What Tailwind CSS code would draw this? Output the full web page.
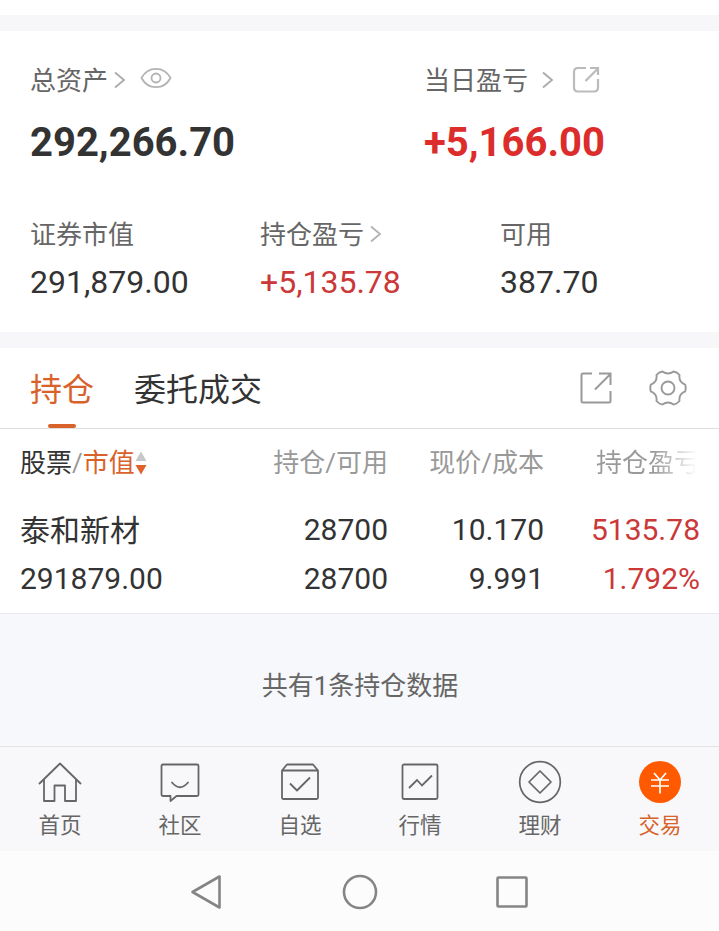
<!DOCTYPE html>
<html lang="zh-CN">

<head>
  <meta charset="UTF-8">
  <meta name="viewport" content="width=device-width, initial-scale=1.0">
  <title>交易</title>
  <script src="https://cdn.jsdelivr.net/npm/@tailwindcss/browser@4"></script>
</head>

<body class="bg-[#fcfcfc] font-['Roboto','Noto_Sans_CJK_SC',sans-serif] text-[#333] overflow-hidden">
  <div class="w-[719px] h-[931px] flex flex-col overflow-hidden">
    <div class="h-[15px] shrink-0 bg-white"></div>
    <div class="h-4 shrink-0 bg-[#f7f7fa]"></div>

    <!-- Account summary -->
    <section class="h-[301px] shrink-0 bg-white px-[30px] pt-[30px]">
      <div class="flex">
        <div class="w-[394px]">
          <div class="h-10 flex items-center text-[26px] text-[#666]">
            <span>总资产</span>
            <svg class="ml-[6px] w-3 h-[18px] -mt-[2px]" viewBox="0 0 12 18" fill="none" stroke="#aaa" stroke-width="1.8"><path d="M1 1.5 10 9 1 16.5" /></svg>
            <svg class="ml-[14px] w-[32px] h-[22px] -mt-[6px]" viewBox="0 0 32 22" fill="none" stroke="#b3b3b3" stroke-width="1.8"><path d="M1.500 11C8-1.200 24-1.200 30.500 11 24 23.200 8 23.200 1.500 11Z" /><circle cx="16" cy="11" r="4.500" /></svg>
          </div>
          <div class="mt-[18px] h-12 leading-12 text-[40px] font-bold">292,266.70</div>
        </div>
        <div>
          <div class="h-10 flex items-center text-[26px] text-[#666]">
            <span>当日盈亏</span>
            <svg class="ml-[14px] w-3 h-[18px] -mt-[3px]" viewBox="0 0 12 18" fill="none" stroke="#aaa" stroke-width="1.8"><path d="M1 1.5 10 9 1 16.5" /></svg>
            <svg class="ml-[18px] w-7 h-7 -mt-[3px]" viewBox="0 0 28 28" fill="none" stroke="#bbb" stroke-width="2.200"><path d="M14 2H6Q2 2 2 6V21.500Q2 25.500 6 25.500H22Q26 25.500 26 21.500V13M13.500 15 25.500 3M18 2H26V9" /></svg>
          </div>
          <div class="mt-[18px] h-12 leading-12 text-[40px] font-bold text-[#dc2c2c]">+5,166.00</div>
        </div>
      </div>

      <div class="mt-[48px] flex">
        <div class="w-[230px]">
          <div class="h-10 flex items-center text-[26px] text-[#666]">证券市值</div>
          <div class="mt-[7px] h-10 leading-10 text-[32px]">291,879.00</div>
        </div>
        <div class="w-[240px]">
          <div class="h-10 flex items-center text-[26px] text-[#666]">
            <span>持仓盈亏</span>
            <svg class="ml-[6px] w-3 h-[18px] -mt-[3px]" viewBox="0 0 12 18" fill="none" stroke="#b3b3b3" stroke-width="1.8"><path d="M1 1.5 10 9 1 16.5" /></svg>
          </div>
          <div class="mt-[7px] h-10 leading-10 text-[32px] text-[#cb3838]">+5,135.78</div>
        </div>
        <div>
          <div class="h-10 flex items-center text-[26px] text-[#666]">可用</div>
          <div class="mt-[7px] h-10 leading-10 text-[32px]">387.70</div>
        </div>
      </div>
    </section>

    <div class="h-4 shrink-0 bg-[#f7f7fa]"></div>

    <!-- Tabs -->
    <div class="h-[81px] shrink-0 bg-white border-b border-[#dedede] px-[30px] flex">
      <div class="relative w-16 h-[82px] text-[32px] leading-[84px] text-[#d9622b]">
        持仓
        <div class="absolute left-[18px] bottom-[2px] w-7 h-1 rounded-full bg-[#d9622b]"></div>
      </div>
      <div class="ml-10 text-[32px] leading-[84px]">委托成交</div>
      <svg class="ml-auto mt-6 w-8 h-8" viewBox="0 0 32 32" fill="none" stroke="#999" stroke-width="2"><path d="M12 1.500H3Q1.500 1.500 1.500 3V29Q1.500 30.500 3 30.500H29Q30.500 30.500 30.500 29V19M15 17.500 30 2.500M19 1.500H30.500V13" /></svg>
      <svg class="ml-[37px] mt-[21px] mr-[2px] w-[38px] h-[38px]" viewBox="0 0 38 38" fill="none" stroke="#999" stroke-width="1.900" stroke-linejoin="round"><path d="M24.600 2.500Q19 6.500 13.400 2.500Q10 3 7.500 6Q8.500 13 1.800 15.600Q.8 19 1.800 22.400Q8.500 25 7.500 32Q10 35 13.400 35.500Q19 31.500 24.600 35.500Q28 35 30.500 32Q29.500 25 36.200 22.400Q37.200 19 36.200 15.600Q29.500 13 30.500 6Q28 3 24.600 2.500Z" /><circle cx="19" cy="19" r="6.500" /></svg>
    </div>

    <!-- Positions -->
    <div class="h-[184px] shrink-0 bg-white pl-[20px] pr-[19px] flex">
      <div class="w-[227px]">
        <div class="h-[68px] flex items-center text-[26px]">
          <span>股票</span><span class="text-[#999]">/</span><span class="text-[#d9622b]">市值</span>
          <svg class="w-3 h-6" viewBox="0 0 12 24"><path d="M6 .5 11.500 10H.5Z" fill="#c8c8c8" /><path d="M6 23.500 11.500 14H.5Z" fill="#e0622a" /></svg>
        </div>
        <div class="mt-[9px] h-12 leading-[50px] text-[30px]">泰和新材</div>
        <div class="h-[50px] leading-[50px] text-[30px]">291879.00</div>
      </div>
      <div class="w-[141px] text-right">
        <div class="h-[68px] leading-[68px] text-[26px] text-[#999]">持仓/可用</div>
        <div class="mt-[9px] h-12 leading-12 text-[30px]">28700</div>
        <div class="h-[50px] leading-[50px] text-[30px]">28700</div>
      </div>
      <div class="w-[156px] text-right">
        <div class="h-[68px] leading-[68px] text-[26px] text-[#999]">现价/成本</div>
        <div class="mt-[9px] h-12 leading-12 text-[30px]">10.170</div>
        <div class="h-[50px] leading-[50px] text-[30px]">9.991</div>
      </div>
      <div class="w-[156px] text-right text-[#cb3838]">
        <div class="h-[68px] leading-[68px] text-[26px]"><span class="bg-linear-to-r from-[#999] from-55% to-white to-97% bg-clip-text text-transparent">持仓盈亏</span></div>
        <div class="mt-[9px] h-12 leading-12 text-[30px]">5135.78</div>
        <div class="h-[50px] leading-[50px] text-[30px]">1.792%</div>
      </div>
    </div>

    <div class="h-[133px] shrink-0 bg-[#f7f8fb] border-t border-[#e9ebee] pt-[52px] pl-px text-center text-[26px] leading-10 text-[#666]">共有1条持仓数据</div>

    <!-- Bottom navigation -->
    <nav class="w-[720px] h-[105px] shrink-0 bg-[#f8f8fa] border-t border-[#e3e3e5] grid grid-cols-6 text-[21.500px] leading-8 text-[#666]">
      <div class="flex flex-col items-center pt-[13px]">
        <svg class="w-11 h-11" viewBox="0 0 44 44" fill="none" stroke="#666" stroke-width="1.800" stroke-linejoin="round"><path d="M1 24 22 3.500 43 24M6 19.500V41H16.500V25.500H27V41H38V19.500" /></svg>
        <span class="mt-[6px]">首页</span>
      </div>
      <div class="flex flex-col items-center pt-[13px]">
        <svg class="w-11 h-11" viewBox="0 0 44 44" fill="none" stroke="#666" stroke-width="1.800" stroke-linejoin="round" stroke-linecap="round"><path d="M5 4.500H39Q40.500 4.500 40.500 6V34.500Q40.500 36 39 36H18.500L12.500 41V36H5Q3.500 36 3.500 34.500V6Q3.500 4.500 5 4.500ZM14 22.500Q22 32 30 22.500" /></svg>
        <span class="mt-[6px]">社区</span>
      </div>
      <div class="flex flex-col items-center pt-[13px]">
        <svg class="w-11 h-11" viewBox="0 0 44 44" fill="none" stroke="#666" stroke-width="1.800" stroke-linejoin="round"><path d="M4 10.500 9 4.500H35L40 10.500V37.500Q40 39 38.500 39H5.500Q4 39 4 37.500ZM4 10.500H40M12 23.500 19 30.500 32 17.500" /></svg>
        <span class="mt-[6px]">自选</span>
      </div>
      <div class="flex flex-col items-center pt-[13px]">
        <svg class="w-11 h-11" viewBox="0 0 44 44" fill="none" stroke="#666" stroke-width="1.800"><rect x="4.500" y="4.500" width="35" height="34.500" rx="1.500" /><path d="M11 28 19 20 24 25.500 34 15.500" /></svg>
        <span class="mt-[6px]">行情</span>
      </div>
      <div class="flex flex-col items-center pt-[13px]">
        <svg class="w-11 h-11" viewBox="0 0 44 44" fill="none" stroke="#666" stroke-width="1.700" stroke-linejoin="round"><circle cx="22" cy="22" r="20.300" /><path d="M22 11 33 22 22 33 11 22Z" /></svg>
        <span class="mt-[6px]">理财</span>
      </div>
      <div class="flex flex-col items-center pt-[13px] text-[#d9622b]">
        <svg class="w-11 h-11" viewBox="0 0 44 44" fill="none" stroke="#fff" stroke-width="1.700"><circle cx="22" cy="22" r="21" fill="#ff5a00" stroke="none" /><path d="M16 13 22 20 28 13M13 20H31M13 26H31M22 20V33.500" /></svg>
        <span class="mt-[6px]">交易</span>
      </div>
    </nav>

    <!-- System keys -->
    <div class="h-20 shrink-0 bg-[#fcfcfc] flex items-center justify-center gap-[116px] pt-[2px]">
      <svg class="w-9 h-9" viewBox="0 0 36 36" fill="none" stroke="#858585" stroke-width="2.600" stroke-linejoin="round"><path d="M2.500 18 29.500 2.500V33.500Z" /></svg>
      <svg class="w-9 h-9" viewBox="0 0 36 36" fill="none" stroke="#858585" stroke-width="2.600"><circle cx="18" cy="18" r="16" /></svg>
      <svg class="w-9 h-9" viewBox="0 0 36 36" fill="none" stroke="#858585" stroke-width="2.600"><rect x="3.500" y="3.500" width="29" height="29" rx="1" /></svg>
    </div>
  </div>
</body>

</html>
